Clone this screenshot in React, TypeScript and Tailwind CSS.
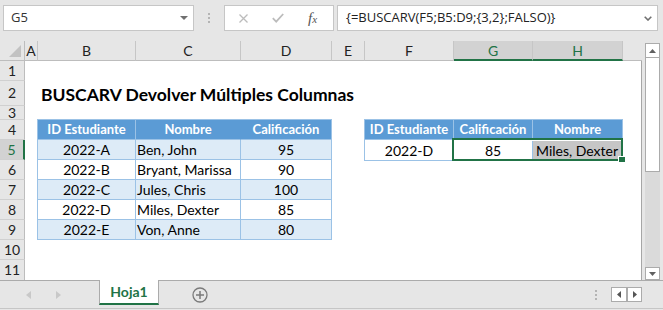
import React from "react";

const colHeaders = [
  { l: "A", c: "w-[13px]", sel: false },
  { l: "B", c: "w-[98px]", sel: false },
  { l: "C", c: "w-[105px]", sel: false },
  { l: "D", c: "w-[91px]", sel: false },
  { l: "E", c: "w-[33px]", sel: false },
  { l: "F", c: "w-[89px]", sel: false },
  { l: "G", c: "w-[79px]", sel: true },
  { l: "H", c: "w-[90px]", sel: true },
];

const rowHeaders = [
  { n: "1", h: "h-[20px]" },
  { n: "2", h: "h-[25px]" },
  { n: "3", h: "h-[14px]" },
  { n: "4", h: "h-[20px]" },
  { n: "5", h: "h-[20px]", sel: true },
  { n: "6", h: "h-[20px]" },
  { n: "7", h: "h-[20px]" },
  { n: "8", h: "h-[20px]" },
  { n: "9", h: "h-[20px]" },
  { n: "10", h: "h-[20px]" },
  { n: "11", h: "h-[20px]", last: true },
];

const data = [
  ["2022-A", "Ben, John", "95"],
  ["2022-B", "Bryant, Marissa", "90"],
  ["2022-C", "Jules, Chris", "100"],
  ["2022-D", "Miles, Dexter", "85"],
  ["2022-E", "Von, Anne", "80"],
];

const cellBase = "h-[20px] border-r border-b border-[#9bc2e6] flex items-center";
const headCell = cellBase + " bg-[#5b9bd5] text-white font-bold text-[13px] justify-center";

export default function App() {
  return (
    <div className="relative w-[663px] h-[310px] overflow-hidden bg-[#e6e6e6] font-['Lato',sans-serif] text-black">
      {/* Formula bar */}
      <div className="flex h-[41px] items-start pl-[3px] pt-[5px]">
        <div className="flex h-[26px] w-[191px] items-center justify-between border border-[#c6c6c6] bg-white pl-[7px] pr-[5px]">
          <span className="font-['Open_Sans',sans-serif] text-[13px] text-[#333]">G5</span>
          <svg width="8" height="4" viewBox="0 0 8 4">
            <path d="M0 0h8L4 4z" fill="#707070" />
          </svg>
        </div>
        <div className="flex h-[26px] w-[30px] flex-col items-center justify-center gap-[2px]">
          <div className="h-[2px] w-[2px] bg-[#b4b4b4]" />
          <div className="h-[2px] w-[2px] bg-[#b4b4b4]" />
          <div className="h-[2px] w-[2px] bg-[#b4b4b4]" />
        </div>
        <div className="flex h-[26px] w-[110px] items-center border border-[#c6c6c6] bg-white pl-[14px]">
          <svg width="9" height="9" viewBox="0 0 9 9">
            <path d="M0.5 0.5L8.5 8.5M8.5 0.5L0.5 8.5" stroke="#bcbcbc" strokeWidth="1.3" />
          </svg>
          <svg className="ml-[24px]" width="12" height="10" viewBox="0 0 12 10">
            <path d="M0.8 5.2L4.2 8.6L11.2 1" stroke="#bcbcbc" strokeWidth="1.8" fill="none" />
          </svg>
          <span className="ml-[24px] font-['Liberation_Serif',serif] italic text-[15px] leading-none text-[#555]">
            f<span className="text-[11px]">x</span>
          </span>
        </div>
        <div className="ml-[3px] flex h-[26px] w-[321px] items-center justify-between border border-[#c6c6c6] bg-white pl-[8px] pr-[5px]">
          <span className="font-['Open_Sans',sans-serif] text-[13px] text-[#222]">
            {"{=BUSCARV(F5;B5:D9;{3,2};FALSO)}"}
          </span>
          <svg width="8" height="5" viewBox="0 0 8 5">
            <path d="M0.7 0.7L4 4L7.3 0.7" stroke="#707070" strokeWidth="1.6" fill="none" />
          </svg>
        </div>
      </div>

      {/* Sheet */}
      <div className="flex h-[239px]">
        <div className="flex w-[642px] flex-col">
          {/* column headers */}
          <div className="flex h-[20px]">
            <div className="relative w-[25px] border-r border-b border-[#bdbdbd]">
              <svg className="absolute left-0 top-0" width="24" height="19" viewBox="0 0 24 19">
                <path d="M9 16H21V4Z" fill="#c2c2c2" />
              </svg>
            </div>
            {colHeaders.map((c) =>
              c.sel ? (
                <div
                  key={c.l}
                  className={`${c.c} flex items-center justify-center border-r border-[#c6c6c6] border-b-2 border-b-[#217346] bg-[#d2d2d2] text-[14px] text-[#217346]`}
                >
                  {c.l}
                </div>
              ) : (
                <div
                  key={c.l}
                  className={`${c.c} flex items-center justify-center border-r border-[#c6c6c6] border-b border-b-[#bdbdbd] text-[14px] text-[#222]`}
                >
                  {c.l}
                </div>
              )
            )}
            <div className="flex-1 border-b border-[#bdbdbd]" />
          </div>

          <div className="flex h-[219px]">
            {/* row headers */}
            <div className="flex w-[25px] flex-col">
              {rowHeaders.map((r) => (
                <div
                  key={r.n}
                  className={`${r.h} flex items-center justify-center overflow-hidden text-[14px] leading-[14px] ${
                    r.last ? "" : "border-b border-b-[#d0d0d0]"
                  } ${
                    r.sel
                      ? "border-r-2 border-r-[#217346] bg-[#d2d2d2] text-[#217346]"
                      : "border-r border-r-[#bdbdbd] text-[#222]"
                  }`}
                >
                  {r.n}
                </div>
              ))}
            </div>

            {/* cells */}
            <div className="flex w-[617px] flex-col border-r border-[#a6a6a6] bg-white">
              <div className="h-[20px]" />
              <div className="flex h-[25px] items-end pl-[16px]">
                <span className="text-[17.5px] font-bold leading-[22px]">BUSCARV Devolver Múltiples Columnas</span>
              </div>
              <div className="h-[13px]" />
              <div className="flex h-[121px] text-[14px]">
                <div className="w-[12px]" />
                {/* left table */}
                <div className="grid w-[295px] grid-cols-[98px_105px_91px] border-l border-t border-[#9bc2e6]">
                  <div className={headCell}>ID Estudiante</div>
                  <div className={headCell + " border-r-[#5b9bd5]"}>Nombre</div>
                  <div className={headCell}>Calificación</div>
                  {data.map((r, i) => {
                    const bg = i % 2 === 0 ? " bg-[#ddebf7]" : " bg-white";
                    return (
                      <React.Fragment key={r[0]}>
                        <div className={cellBase + bg + " justify-center"}>{r[0]}</div>
                        <div className={cellBase + bg + " pl-[1px]"}>{r[1]}</div>
                        <div className={cellBase + bg + " justify-center"}>{r[2]}</div>
                      </React.Fragment>
                    );
                  })}
                </div>
                <div className="w-[32px]" />
                {/* right table */}
                <div className="grid h-[42px] w-[259px] grid-cols-[89px_79px_90px] border-l border-t border-[#9bc2e6]">
                  <div className={headCell}>ID Estudiante</div>
                  <div className={headCell}>Calificación</div>
                  <div className={headCell}>Nombre</div>
                  <div className={cellBase + " bg-white justify-center"}>2022-D</div>
                  <div className={cellBase + " bg-white justify-center"}>85</div>
                  <div className={cellBase + " bg-[#c6c6c6] pl-[3px]"}>Miles, Dexter</div>
                </div>
              </div>
            </div>
          </div>
        </div>

        {/* vertical scrollbar */}
        <div className="flex w-[21px] flex-col pl-[3px] pt-[2px]">
          <div className="flex h-[15px] w-[15px] items-center justify-center border border-[#ababab] bg-white">
            <svg width="7" height="4" viewBox="0 0 7 4">
              <path d="M0 4H7L3.5 0Z" fill="#606060" />
            </svg>
          </div>
          <div className="h-[114px] w-[15px] border-x border-b border-[#ababab] bg-white" />
          <div className="h-[95px] w-[15px] bg-[#dadada]" />
          <div className="flex h-[13px] w-[15px] items-center justify-center border border-[#ababab] bg-white">
            <svg width="7" height="4" viewBox="0 0 7 4">
              <path d="M0 0H7L3.5 4Z" fill="#606060" />
            </svg>
          </div>
        </div>
      </div>

      {/* Tab bar */}
      <div className="flex h-[29px] items-start border-t border-b border-t-[#ababab] border-b-[#c6c6c6]">
        <div className="flex h-[27px] w-[99px] items-center pl-[26px]">
          <svg width="5" height="8" viewBox="0 0 5 8">
            <path d="M5 0V8L0 4Z" fill="#c8c8c8" />
          </svg>
          <svg className="ml-[25px]" width="5" height="8" viewBox="0 0 5 8">
            <path d="M0 0V8L5 4Z" fill="#c8c8c8" />
          </svg>
        </div>
        <div className="-mt-px flex h-[25px] w-[60px] items-center justify-center border-x border-x-[#ababab] border-b-2 border-b-[#217346] bg-white text-[14px] font-bold text-[#217346]">
          Hoja1
        </div>
        <div className="flex h-[27px] items-center pl-[33px]">
          <svg width="16" height="16" viewBox="0 0 16 16">
            <circle cx="8" cy="8" r="7" stroke="#7a7a7a" strokeWidth="1.3" fill="none" />
            <path d="M8 4V12M4 8H12" stroke="#7a7a7a" strokeWidth="1.5" />
          </svg>
        </div>
        <div className="ml-auto flex h-[27px] items-center pr-[21px]">
          <div className="flex flex-col gap-[2px]">
            <div className="h-[2px] w-[2px] bg-[#b4b4b4]" />
            <div className="h-[2px] w-[2px] bg-[#b4b4b4]" />
            <div className="h-[2px] w-[2px] bg-[#b4b4b4]" />
          </div>
          <div className="ml-[14px] flex h-[15px] w-[16px] items-center justify-center border border-[#ababab] bg-white">
            <svg width="4" height="7" viewBox="0 0 4 7">
              <path d="M4 0V7L0 3.5Z" fill="#555" />
            </svg>
          </div>
          <div className="flex h-[15px] w-[15px] items-center justify-center border border-[#ababab] bg-white">
            <svg width="4" height="7" viewBox="0 0 4 7">
              <path d="M0 0V7L4 3.5Z" fill="#555" />
            </svg>
          </div>
        </div>
      </div>

      {/* selection overlay */}
      <div className="pointer-events-none absolute left-[452px] top-[138px] h-[23px] w-[171px] border-2 border-[#217346]" />
      <div className="pointer-events-none absolute left-[618px] top-[156px] h-[7px] w-[8px] border border-white bg-[#217346]" />
    </div>
  );
}
